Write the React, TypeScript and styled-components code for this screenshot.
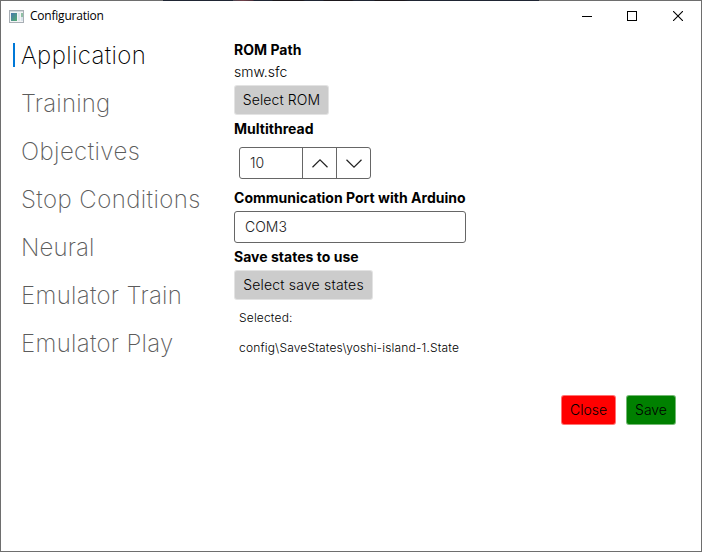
import React, { useState } from "react";
import styled, { createGlobalStyle } from "styled-components";

const GlobalStyle = createGlobalStyle`
  *, *::before, *::after { box-sizing: border-box; }
  body { margin: 0; background: #fff; overflow: hidden; }
  button, input { font: inherit; color: inherit; letter-spacing: inherit; }
`;

const Window = styled.div`
  width: 702px;
  height: 552px;
  display: flex;
  flex-direction: column;
  border: 1px solid #6e6e6e;
  border-top: 0;
  background: #fff;
  color: #000;
  font-family: Inter, sans-serif;
  font-size: 14px;
`;

const TopEdge = styled.div`
  flex: none;
  height: 1px;
  margin: 0 -1px;
  background: linear-gradient(
    to right,
    #6e6e6e 163px, #1f2533 163px, #1f2533 233px, #4b4650 233px, #704049 243px,
    #4a2e38 253px, #1f2533 254px, #1f2533 272px, #1b171b 273px, #1b171b 303px,
    #1f2533 305px, #1f2533 323px, #1b171b 324px, #1b171b 352px, #1f2533 354px,
    #1f2533 374px, #1b171b 375px, #1b171b 404px, #1f2533 410px, #1f2533 539px,
    #6e6e6e 539px
  );
`;

const TitleBar = styled.header`
  flex: none;
  height: 30px;
  display: flex;
  align-items: center;
  padding-left: 8px;
`;

const Title = styled.h1`
  flex: 1;
  margin: 0 0 0 6px;
  font: 400 12px/16px "Open Sans", sans-serif;
  letter-spacing: -0.22px;
`;

const WindowButton = styled.button`
  width: 46px;
  height: 29px;
  padding: 0;
  border: 0;
  background: transparent;
  display: grid;
  place-items: center;
`;

const Body = styled.div`
  flex: 1;
  display: flex;
`;

const Nav = styled.nav`
  width: 233px;
  padding-left: 12px;
  display: flex;
  flex-direction: column;
`;

const NavItem = styled.button<{ $active: boolean; $spacing: number }>`
  height: 48px;
  padding: 1px 0 0;
  border: 0;
  background: transparent;
  display: flex;
  align-items: center;
  font-size: 24px;
  line-height: 29px;
  font-weight: 200;
  letter-spacing: ${(p) => p.$spacing}px;
  color: ${(p) => (p.$active ? "#000" : "#5c5c5c")};
  &::before {
    content: "";
    width: 2px;
    height: 24px;
    margin: -1px 6px 0 0;
    background: ${(p) => (p.$active ? "#0078d7" : "transparent")};
  }
`;

const Content = styled.main`
  flex: 1;
  padding: 9px 25px 0 0;
  display: flex;
  flex-direction: column;
  align-items: flex-start;
  font-weight: 300;
`;

const Label = styled.label`
  height: 20px;
  line-height: 20px;
  font-weight: 700;
  letter-spacing: 0.02px;
  white-space: nowrap;
`;

const Value = styled.div`
  height: 25px;
  line-height: 24px;
`;

const Button = styled.button<{ $width: number; $color?: string; $spacing?: number }>`
  width: ${(p) => p.$width}px;
  height: 30px;
  padding: 0 0 2px;
  border: 1px solid rgba(255, 255, 255, 0.45);
  border-radius: 3px;
  background: ${(p) => p.$color ?? "#ccc"};
  letter-spacing: ${(p) => p.$spacing ?? 0}px;
  white-space: nowrap;
`;

const Spinner = styled.div`
  width: 132px;
  height: 32px;
  margin: 8px 0 9px 5px;
  display: flex;
  border: 1px solid #666;
  border-radius: 3px;
`;

const SpinnerInput = styled.input`
  width: 62px;
  padding: 0 10px 1px;
  border: 0;
  outline: 0;
  background: transparent;
  color: #222;
`;

const SpinnerButton = styled.button`
  width: 34px;
  padding: 0;
  border: 0;
  border-left: 1px solid #666;
  background: transparent;
  display: grid;
  place-items: center;
`;

const TextInput = styled.input`
  width: 232px;
  height: 32px;
  margin: 3px 0 4px;
  padding: 0 10px 2px;
  border: 1px solid #666;
  border-radius: 3px;
  outline: 0;
  background: #fff;
  color: #222;
`;

const Field = styled.section<{ $gap: number }>`
  display: flex;
  flex-direction: column;
  align-items: flex-start;
  margin-bottom: ${(p) => p.$gap}px;
`;

const FileList = styled.div`
  margin-left: 5px;
  font-size: 12px;
  line-height: 30px;
  font-weight: 300;
  letter-spacing: 0.17px;
`;

const FileName = styled.div`
  white-space: nowrap;
`;

const Actions = styled.footer`
  align-self: flex-end;
  display: flex;
  gap: 10px;
  margin-top: 32px;
`;

const AppIcon = () => (
  <svg width="15" height="13" viewBox="0 0 15 13">
    <defs>
      <linearGradient id="pane" x1="0" y1="0" x2="1" y2="1">
        <stop offset="0" stopColor="#4777ae" />
        <stop offset="1" stopColor="#55ad70" />
      </linearGradient>
    </defs>
    <rect x=".5" y=".5" width="14" height="12" fill="#f3f4f5" stroke="#a8afb5" />
    <path d="M1 1.5h13" stroke="#d2d8dc" />
    <rect x="2" y="3" width="6" height="8" fill="url(#pane)" />
    <rect x="9" y="3" width="2" height="8" fill="#dfe6ec" />
    <rect x="12" y="3" width="2" height="4" fill="#8fc0a4" />
    <rect x="12" y="7" width="2" height="4" fill="#d9e3ea" />
  </svg>
);

const NAV_ITEMS = [
  { label: "Application", spacing: 0.36 },
  { label: "Training", spacing: 0.18 },
  { label: "Objectives", spacing: 0.4 },
  { label: "Stop Conditions", spacing: 0.42 },
  { label: "Neural", spacing: 0.12 },
  { label: "Emulator Train", spacing: 0.3 },
  { label: "Emulator Play", spacing: 0.3 },
];

export default function App() {
  const [active, setActive] = useState("Application");
  const [threads, setThreads] = useState(10);
  const [port, setPort] = useState("COM3");

  return (
    <>
      <GlobalStyle />
      <Window>
        <TopEdge />
        <TitleBar>
          <AppIcon />
          <Title>Configuration</Title>
          <WindowButton aria-label="Minimize">
            <svg width="12" height="10" shapeRendering="crispEdges"><path d="M2 5.500h10" stroke="#000" /></svg>
          </WindowButton>
          <WindowButton aria-label="Maximize">
            <svg width="10" height="10" shapeRendering="crispEdges"><rect x=".5" y=".5" width="9" height="9" fill="none" stroke="#000" /></svg>
          </WindowButton>
          <WindowButton aria-label="Close window">
            <svg width="10" height="10"><path d="M0 0l10 10M10 0L0 10" stroke="#000" strokeWidth="1.1" /></svg>
          </WindowButton>
        </TitleBar>
        <Body>
          <Nav>
            {NAV_ITEMS.map(({ label, spacing }) => (
              <NavItem key={label} $active={label === active} $spacing={spacing} onClick={() => setActive(label)}>
                {label}
              </NavItem>
            ))}
          </Nav>
          <Content>
            <Field $gap={4}>
              <Label>ROM Path</Label>
              <Value>smw.sfc</Value>
              <Button $width={95} $spacing={0.1}>Select ROM</Button>
            </Field>
            <Field $gap={0}>
              <Label>Multithread</Label>
              <Spinner>
                <SpinnerInput value={threads} onChange={(e) => setThreads(Number(e.target.value) || 0)} />
                <SpinnerButton aria-label="Increase" onClick={() => setThreads(threads + 1)}>
                  <svg width="16" height="9" fill="none" stroke="#222" strokeWidth="1.2"><path d="M.5 8.2L8 .9l7.500 7.300" /></svg>
                </SpinnerButton>
                <SpinnerButton aria-label="Decrease" onClick={() => setThreads(threads - 1)}>
                  <svg width="16" height="9" fill="none" stroke="#222" strokeWidth="1.2"><path d="M.5 .8L8 8.100l7.500-7.300" /></svg>
                </SpinnerButton>
              </Spinner>
            </Field>
            <Field $gap={3}>
              <Label>Communication Port with Arduino</Label>
              <TextInput value={port} onChange={(e) => setPort(e.target.value)} />
              <Label>Save states to use</Label>
            </Field>
            <Field $gap={3}>
              <Button $width={139} $spacing={0.2}>Select save states</Button>
            </Field>
            <FileList>
              <FileName>Selected:</FileName>
              <FileName>config\SaveStates\yoshi-island-1.State</FileName>
            </FileList>
            <Actions>
              <Button $width={55} $color="#f00">Close</Button>
              <Button $width={50} $color="#008000">Save</Button>
            </Actions>
          </Content>
        </Body>
      </Window>
    </>
  );
}
